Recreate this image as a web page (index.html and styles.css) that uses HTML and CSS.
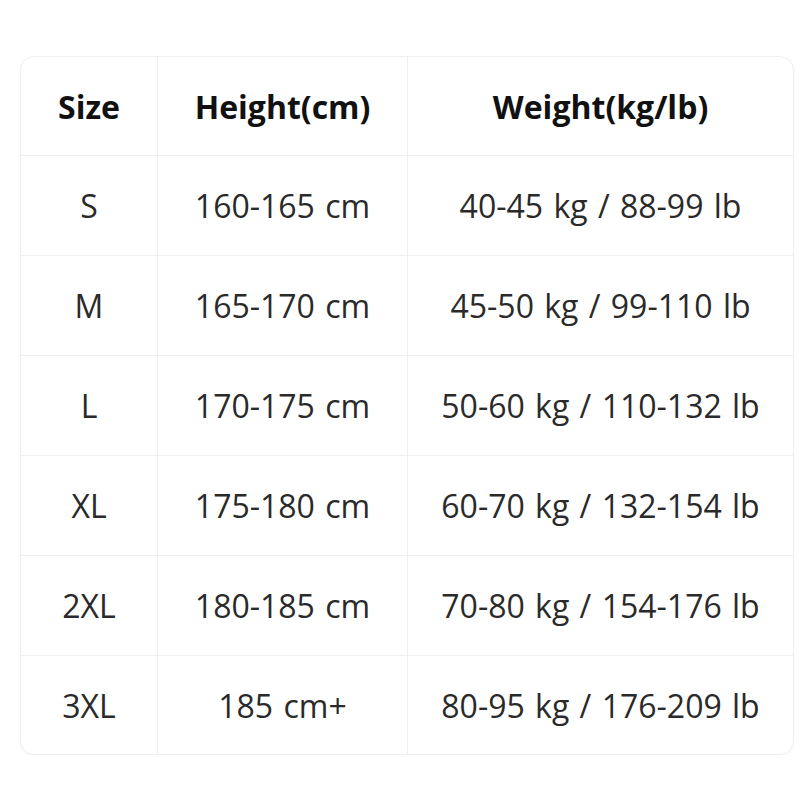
FILE: index.html
```html
<!DOCTYPE html>
<html>
<head>
<meta charset="utf-8">
<link rel="stylesheet" href="styles.css">
</head>
<body>
<div class="chart">
  <div class="cell head">Size</div>
  <div class="cell head">Height(cm)</div>
  <div class="cell head last">Weight(kg/lb)</div>

  <div class="cell">S</div>
  <div class="cell">160-165 cm</div>
  <div class="cell last">40-45 kg / 88-99 lb</div>

  <div class="cell">M</div>
  <div class="cell">165-170 cm</div>
  <div class="cell last">45-50 kg / 99-110 lb</div>

  <div class="cell">L</div>
  <div class="cell">170-175 cm</div>
  <div class="cell last">50-60 kg / 110-132 lb</div>

  <div class="cell">XL</div>
  <div class="cell">175-180 cm</div>
  <div class="cell last">60-70 kg / 132-154 lb</div>

  <div class="cell">2XL</div>
  <div class="cell">180-185 cm</div>
  <div class="cell last">70-80 kg / 154-176 lb</div>

  <div class="cell bottom">3XL</div>
  <div class="cell bottom">185 cm+</div>
  <div class="cell bottom last">80-95 kg / 176-209 lb</div>
</div>
</body>
</html>
```
FILE: styles.css
```css
html, body {
  margin: 0;
  padding: 0;
  background: #ffffff;
}
body {
  padding: 56px 0 0 20px;
  font-family: "Open Sans", "Noto Sans", sans-serif;
}
.chart {
  width: 772px;
  display: grid;
  grid-template-columns: 137px 250px 1fr;
  grid-template-rows: 99px repeat(5, 100px) 98px;
  border: 1px solid #efefef;
  border-radius: 14px;
  overflow: hidden;
  box-shadow: 0 1px 3px rgba(0,0,0,0.04);
}
.cell {
  display: flex;
  align-items: center;
  justify-content: center;
  border-right: 1px solid #efefef;
  border-bottom: 1px solid #efefef;
  font-size: 32px;
  color: #2a2a2a;
  word-spacing: 2px;
}
.cell.last {
  border-right: none;
}
.cell.bottom {
  border-bottom: none;
}
.cell.head {
  font-weight: 700;
  color: #111111;
  word-spacing: 0;
}
```
